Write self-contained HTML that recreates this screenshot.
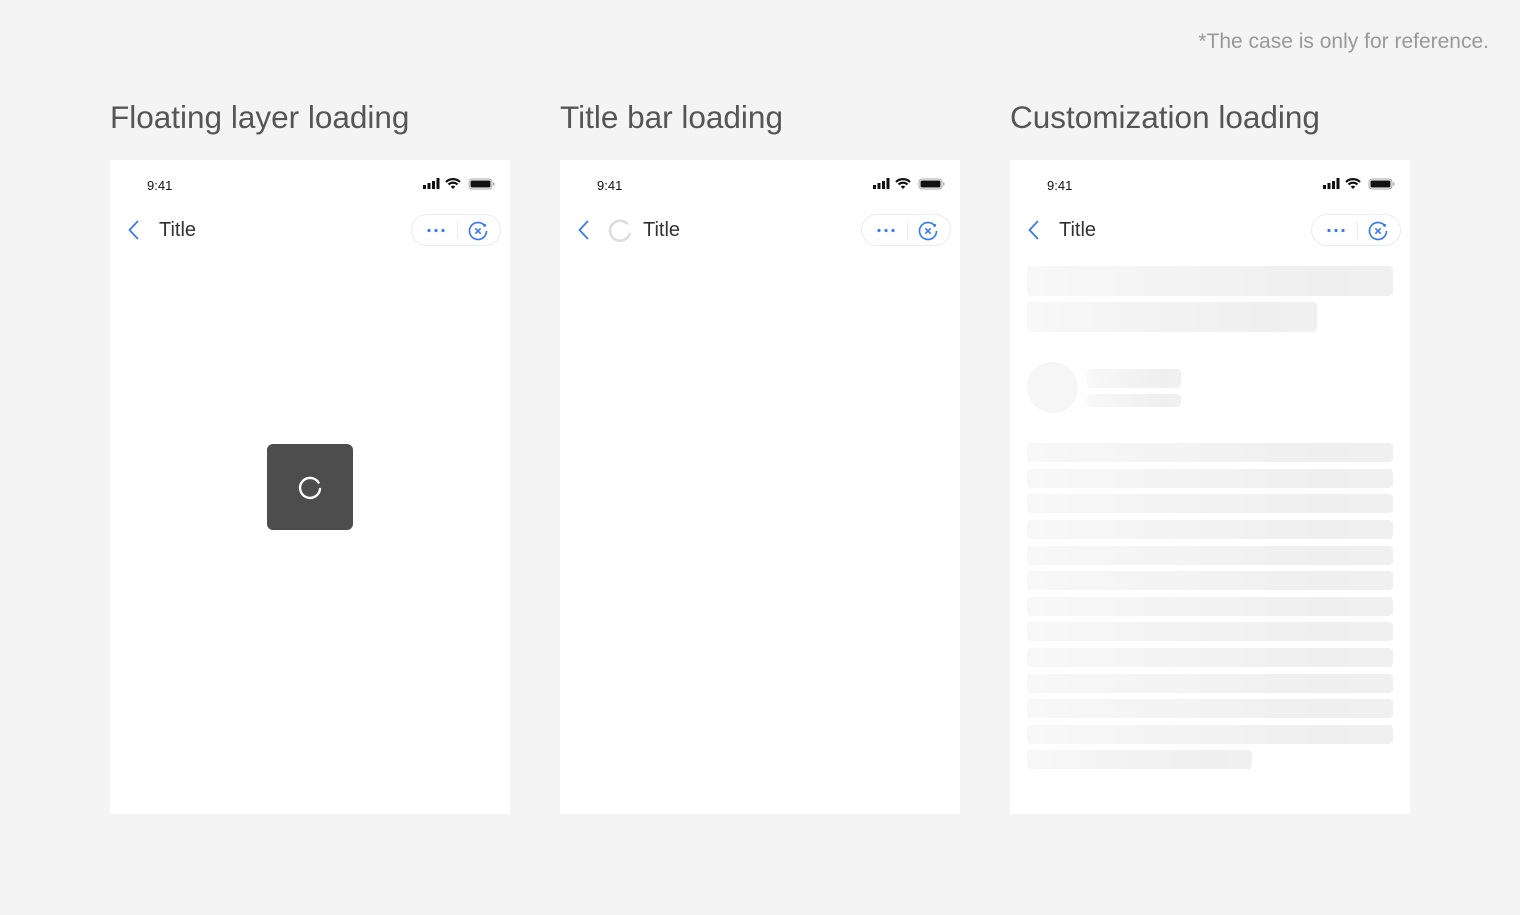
<!DOCTYPE html>
<html><head><meta charset="utf-8"><style>
*{margin:0;padding:0;box-sizing:border-box}
body{width:1520px;height:915px;background:#f4f4f4;font-family:"Liberation Sans",Arial,sans-serif;position:relative;overflow:hidden}
.note{position:absolute;right:31px;top:30px;font-size:21px;color:#999}
.h{position:absolute;top:99px;font-size:31.5px;color:#555}
.p{position:absolute;top:160px;width:400px;height:654px;background:#fff}
.t{position:absolute;left:37px;top:18px;font-size:13px;color:#111}
.sb{position:absolute;left:312px;top:17px}
.back{position:absolute;left:17px;top:60px}
.title{position:absolute;left:49px;top:59px;font-size:20px;color:#333}
.cap{position:absolute;left:301px;top:54px;width:90px;height:32px;border:1px solid #ececec;border-radius:16px}
.cap .d{position:absolute;left:45px;top:7px;width:1px;height:17px;background:#ececec}
.sk{position:absolute;left:17px;border-radius:4px;background:linear-gradient(90deg,#f8f8f8,#efefef 80%,#f0f0f0)}
</style></head><body>
<div class="note">*The case is only for reference.</div>
<div class="h" style="left:110px">Floating layer loading</div>
<div class="h" style="left:560px">Title bar loading</div>
<div class="h" style="left:1010px">Customization loading</div>

<div class="p" style="left:110px">
 <div class="t">9:41</div>
 <svg class="sb" width="74" height="14" viewBox="0 0 74 14"><rect x="1" y="8" width="3" height="4" fill="#111"/><rect x="5.5" y="6" width="3" height="6" fill="#111"/><rect x="10" y="4" width="3" height="8" fill="#111"/><rect x="14.5" y="1" width="3" height="11" fill="#111"/><path d="M24 5a10 10 0 0 1 14 0M26.5 7.5a6.5 6.5 0 0 1 9 0" stroke="#111" stroke-width="2.2" fill="none"/><path d="M31 12l-2.3-2.4a3.3 3.3 0 0 1 4.6 0z" fill="#111"/><rect x="47" y="2" width="23" height="10" rx="3" fill="none" stroke="#aaa"/><rect x="48.5" y="3.5" width="20" height="7" rx="1.5" fill="#111"/><rect x="71" y="5.5" width="1.5" height="3" fill="#aaa"/></svg>
 <svg class="back" width="14" height="20" viewBox="0 0 14 20"><path d="M11 1L2.5 10L11 19" stroke="#3b7bf0" stroke-width="1.8" fill="none"/></svg>
 <div class="title">Title</div>
 <div class="cap"><svg style="position:absolute;left:15px;top:13px" width="18" height="5"><circle cx="2" cy="2.5" r="1.6" fill="#3b7bf0"/><circle cx="9" cy="2.5" r="1.6" fill="#3b7bf0"/><circle cx="16" cy="2.5" r="1.6" fill="#3b7bf0"/></svg><div class="d"></div><svg style="position:absolute;left:55px;top:5px" width="22" height="22" viewBox="0 0 22 22"><path d="M17.5 5.5A8.5 8.5 0 1 0 19.5 11" stroke="#3b7bf0" stroke-width="1.7" fill="none"/><circle cx="17.6" cy="5.4" r="1.5" fill="#3b7bf0"/><path d="M8.3 8.3l5.4 5.4M13.7 8.3l-5.4 5.4" stroke="#3b7bf0" stroke-width="1.6"/></svg></div>
 <div style="position:absolute;left:157px;top:284px;width:86px;height:86px;background:#4d4d4d;border-radius:6px"><svg style="position:absolute;left:30px;top:30px" width="26" height="26" viewBox="0 0 26 26"><path d="M21.5 8.5A10 10 0 1 0 23 15" stroke="#fff" stroke-width="2.4" fill="none" stroke-linecap="round"/></svg></div>
</div>

<div class="p" style="left:560px">
 <div class="t">9:41</div>
 <svg class="sb" width="74" height="14" viewBox="0 0 74 14"><rect x="1" y="8" width="3" height="4" fill="#111"/><rect x="5.5" y="6" width="3" height="6" fill="#111"/><rect x="10" y="4" width="3" height="8" fill="#111"/><rect x="14.5" y="1" width="3" height="11" fill="#111"/><path d="M24 5a10 10 0 0 1 14 0M26.5 7.5a6.5 6.5 0 0 1 9 0" stroke="#111" stroke-width="2.2" fill="none"/><path d="M31 12l-2.3-2.4a3.3 3.3 0 0 1 4.6 0z" fill="#111"/><rect x="47" y="2" width="23" height="10" rx="3" fill="none" stroke="#aaa"/><rect x="48.5" y="3.5" width="20" height="7" rx="1.5" fill="#111"/><rect x="71" y="5.5" width="1.5" height="3" fill="#aaa"/></svg>
 <svg class="back" width="14" height="20" viewBox="0 0 14 20"><path d="M11 1L2.5 10L11 19" stroke="#3b7bf0" stroke-width="1.8" fill="none"/></svg>
 <svg style="position:absolute;left:47px;top:58px" width="26" height="26" viewBox="0 0 26 26"><path d="M20 5.5A10 10 0 1 0 22.5 16" stroke="#ddd" stroke-width="2.6" fill="none" stroke-linecap="round"/></svg>
 <div class="title" style="left:83px">Title</div>
 <div class="cap"><svg style="position:absolute;left:15px;top:13px" width="18" height="5"><circle cx="2" cy="2.5" r="1.6" fill="#3b7bf0"/><circle cx="9" cy="2.5" r="1.6" fill="#3b7bf0"/><circle cx="16" cy="2.5" r="1.6" fill="#3b7bf0"/></svg><div class="d"></div><svg style="position:absolute;left:55px;top:5px" width="22" height="22" viewBox="0 0 22 22"><path d="M17.5 5.5A8.5 8.5 0 1 0 19.5 11" stroke="#3b7bf0" stroke-width="1.7" fill="none"/><circle cx="17.6" cy="5.4" r="1.5" fill="#3b7bf0"/><path d="M8.3 8.3l5.4 5.4M13.7 8.3l-5.4 5.4" stroke="#3b7bf0" stroke-width="1.6"/></svg></div>
</div>

<div class="p" style="left:1010px">
 <div class="t">9:41</div>
 <svg class="sb" width="74" height="14" viewBox="0 0 74 14"><rect x="1" y="8" width="3" height="4" fill="#111"/><rect x="5.5" y="6" width="3" height="6" fill="#111"/><rect x="10" y="4" width="3" height="8" fill="#111"/><rect x="14.5" y="1" width="3" height="11" fill="#111"/><path d="M24 5a10 10 0 0 1 14 0M26.5 7.5a6.5 6.5 0 0 1 9 0" stroke="#111" stroke-width="2.2" fill="none"/><path d="M31 12l-2.3-2.4a3.3 3.3 0 0 1 4.6 0z" fill="#111"/><rect x="47" y="2" width="23" height="10" rx="3" fill="none" stroke="#aaa"/><rect x="48.5" y="3.5" width="20" height="7" rx="1.5" fill="#111"/><rect x="71" y="5.5" width="1.5" height="3" fill="#aaa"/></svg>
 <svg class="back" width="14" height="20" viewBox="0 0 14 20"><path d="M11 1L2.5 10L11 19" stroke="#3b7bf0" stroke-width="1.8" fill="none"/></svg>
 <div class="title">Title</div>
 <div class="cap"><svg style="position:absolute;left:15px;top:13px" width="18" height="5"><circle cx="2" cy="2.5" r="1.6" fill="#3b7bf0"/><circle cx="9" cy="2.5" r="1.6" fill="#3b7bf0"/><circle cx="16" cy="2.5" r="1.6" fill="#3b7bf0"/></svg><div class="d"></div><svg style="position:absolute;left:55px;top:5px" width="22" height="22" viewBox="0 0 22 22"><path d="M17.5 5.5A8.5 8.5 0 1 0 19.5 11" stroke="#3b7bf0" stroke-width="1.7" fill="none"/><circle cx="17.6" cy="5.4" r="1.5" fill="#3b7bf0"/><path d="M8.3 8.3l5.4 5.4M13.7 8.3l-5.4 5.4" stroke="#3b7bf0" stroke-width="1.6"/></svg></div>
 <div class="sk" style="top:106px;width:366px;height:30px"></div>
 <div class="sk" style="top:142px;width:290px;height:30px"></div>
 <div style="position:absolute;left:17px;top:202px;width:51px;height:51px;border-radius:50%;background:#f6f6f6"></div>
 <div class="sk" style="left:77px;top:209px;width:94px;height:19px"></div>
 <div class="sk" style="left:77px;top:234px;width:94px;height:13px"></div>
 <div class="sk" style="top:283px;width:366px;height:19px"></div>
 <div class="sk" style="top:309px;width:366px;height:19px"></div>
 <div class="sk" style="top:334px;width:366px;height:19px"></div>
 <div class="sk" style="top:360px;width:366px;height:19px"></div>
 <div class="sk" style="top:386px;width:366px;height:19px"></div>
 <div class="sk" style="top:411px;width:366px;height:19px"></div>
 <div class="sk" style="top:437px;width:366px;height:19px"></div>
 <div class="sk" style="top:462px;width:366px;height:19px"></div>
 <div class="sk" style="top:488px;width:366px;height:19px"></div>
 <div class="sk" style="top:514px;width:366px;height:19px"></div>
 <div class="sk" style="top:539px;width:366px;height:19px"></div>
 <div class="sk" style="top:565px;width:366px;height:19px"></div>
 <div class="sk" style="top:590px;width:225px;height:19px"></div>
</div>
</body></html>
